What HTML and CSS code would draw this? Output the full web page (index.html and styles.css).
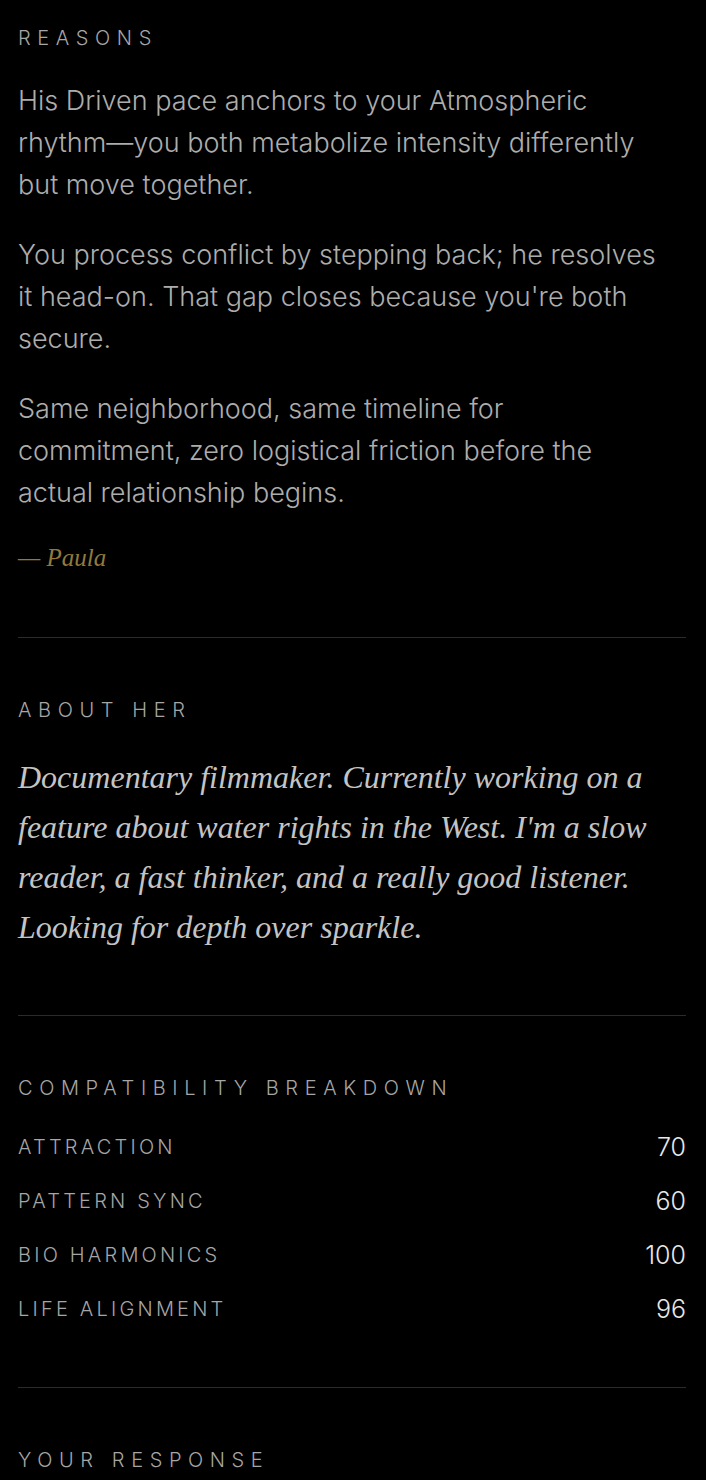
FILE: index.html
```html
<!DOCTYPE html>
<html lang="en">
<head>
  <meta charset="UTF-8">
  <title>Match – Paula</title>
  <link rel="stylesheet" href="styles.css">
</head>
<body>
  <div class="page">
    <section class="block first">
      <h2 class="label">Reasons</h2>
      <p class="reason">His Driven pace anchors to your Atmospheric rhythm—you both metabolize intensity differently but move together.</p>
      <p class="reason">You process conflict by stepping back; he resolves it head-on. That gap closes because you're both secure.</p>
      <p class="reason">Same neighborhood, same timeline for commitment, zero logistical friction before the actual relationship begins.</p>
      <p class="sign">— Paula</p>
    </section>

    <section class="block">
      <h2 class="label">About her</h2>
      <p class="bio">Documentary filmmaker. Currently working on a feature about water rights in the West. I'm a slow reader, a fast thinker, and a really good listener. Looking for depth over sparkle.</p>
    </section>

    <section class="block">
      <h2 class="label">Compatibility breakdown</h2>
      <div class="scores">
        <div class="row"><span class="name">Attraction</span><span class="val">70</span></div>
        <div class="row"><span class="name">Pattern sync</span><span class="val">60</span></div>
        <div class="row"><span class="name">Bio harmonics</span><span class="val">100</span></div>
        <div class="row"><span class="name">Life alignment</span><span class="val">96</span></div>
      </div>
    </section>

    <section class="block last">
      <h2 class="label">Your response</h2>
    </section>
  </div>
</body>
</html>
```

FILE: styles.css
```css
body { margin: 0; background: #000; color: #b3b3b3; font-family: "Inter", "Open Sans", sans-serif; }
.page { padding: 0 20px 0 18px; }

.block { padding: 60px 0 63px; border-top: 1px solid #2b2b2b; }
.block.first { padding-top: 26px; border-top: none; }
.block.last { padding-bottom: 20px; }

.label { margin: 0 0 30px; font-size: 20px; line-height: 24px; font-weight: 300; letter-spacing: 0.33em; text-transform: uppercase; color: #a6a6a6; }

.reason { margin: 0 0 28px; max-width: 640px; font-size: 27px; line-height: 42px; font-weight: 300; color: #adadad; }
.sign { margin: 0; font-family: "Liberation Serif", serif; font-style: italic; font-size: 25px; line-height: 32px; color: #8f7a3c; }

.bio { margin: 0; font-family: "Liberation Serif", serif; font-style: italic; font-size: 32px; line-height: 50px; color: #c4c4c4; }

.scores { display: flex; flex-direction: column; gap: 24px; padding-top: 2px; }
.row { display: flex; justify-content: space-between; align-items: center; height: 30px; }
.name { font-size: 20px; font-weight: 300; letter-spacing: 0.16em; text-transform: uppercase; color: #a6a6a6; }
.val { font-size: 25px; font-weight: 300; color: #e8e8e8; }
```
